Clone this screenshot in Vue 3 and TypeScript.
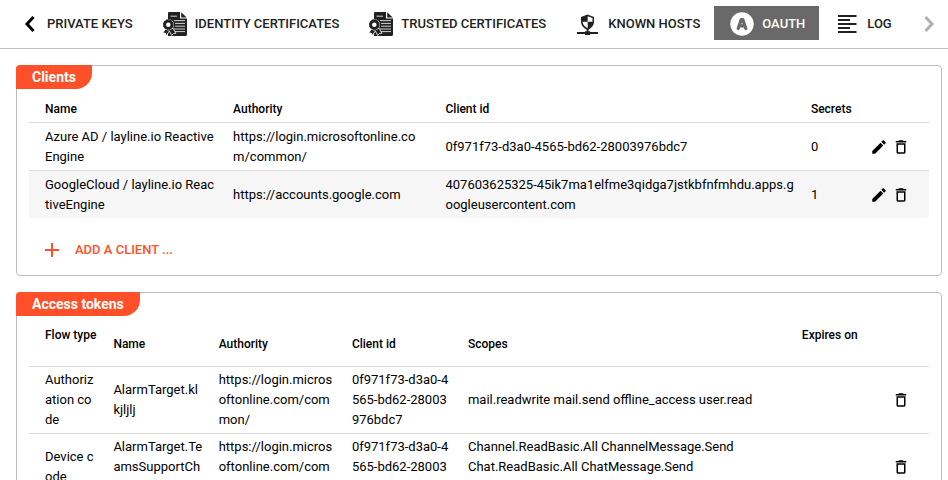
<script setup lang="ts">
import { ref } from 'vue'

type TabIcon = 'none' | 'certificate' | 'host' | 'oauth' | 'log'

interface Tab {
  label: string
  icon: TabIcon
}

interface Client {
  name: string
  authority: string
  clientId: string
  secrets: number
}

interface AccessToken {
  flow: string
  name: string
  authority: string
  clientId: string
  scopes: string
  expires: string
}

const tabs: Tab[] = [
  { label: 'Private keys', icon: 'none' },
  { label: 'Identity certificates', icon: 'certificate' },
  { label: 'Trusted certificates', icon: 'certificate' },
  { label: 'Known hosts', icon: 'host' },
  { label: 'OAuth', icon: 'oauth' },
  { label: 'Log', icon: 'log' },
]
const active = ref('OAuth')

const clients: Client[] = [
  {
    name: 'Azure AD / layline.io Reactive Engine',
    authority: 'https://login.microsoftonline.com/common/',
    clientId: '0f971f73-d3a0-4565-bd62-28003976bdc7',
    secrets: 0,
  },
  {
    name: 'GoogleCloud / layline.io ReactiveEngine',
    authority: 'https://accounts.google.com',
    clientId: '407603625325-45ik7ma1elfme3qidga7jstkbfnfmhdu.apps.googleusercontent.com',
    secrets: 1,
  },
]

const tokens: AccessToken[] = [
  {
    flow: 'Authorization code',
    name: 'AlarmTarget.klkjljlj',
    authority: 'https://login.microsoftonline.com/common/',
    clientId: '0f971f73-d3a0-4565-bd62-28003976bdc7',
    scopes: 'mail.readwrite mail.send offline_access user.read',
    expires: '',
  },
  {
    flow: 'Device code',
    name: 'AlarmTarget.TeamsSupportChannel',
    authority: 'https://login.microsoftonline.com/common/',
    clientId: '0f971f73-d3a0-4565-bd62-28003976bdc7',
    scopes: 'Channel.ReadBasic.All ChannelMessage.Send Chat.ReadBasic.All ChatMessage.Send ChannelMessage.Read.All',
    expires: '',
  },
]
</script>

<template>
  <div class="app">
    <header class="bar">
      <button class="scroll prev" type="button" aria-label="Previous tabs">
        <svg viewBox="0 0 18 18"><path d="M12.500 2 6 9l6.500 7" /></svg>
      </button>
      <nav class="tabs">
        <button
          v-for="tab in tabs"
          :key="tab.label"
          type="button"
          class="tab"
          :class="{ active: tab.label === active }"
          @click="active = tab.label"
        >
          <svg v-if="tab.icon === 'certificate'" class="tab-icon" viewBox="0 0 24 24">
            <path fill="currentColor" d="M6 0h11v6.500h7V22.500q0 1.500-1.500 1.500H5V1Q5 0 6 0z" />
            <path fill="currentColor" d="M18.200 0.300 23.700 5.400h-5.500z" />
            <path fill="none" stroke="#fff" stroke-width="0.800" d="M7.500 4.200H14M11 8.600h11M12 11.400h10M12 14.200h10M11 17h11M11 19.600h11" />
            <path fill="currentColor" stroke="#fff" stroke-width="0.800" d="M2.800 16.500-.3 21l2.600.1 1.100 2.400 3-4.500 2.300 4.500 1.800-2 2.500-.3-3-5z" />
            <circle cx="5.300" cy="12.700" r="5.700" fill="#fff" />
            <circle cx="5.300" cy="12.700" r="3.700" fill="#fff" stroke="currentColor" stroke-width="2.800" />
            <circle cx="5.300" cy="12.700" r="4.900" fill="none" stroke="currentColor" stroke-width="1" stroke-dasharray="1.500 1" />
          </svg>
          <svg v-else-if="tab.icon === 'host'" class="tab-icon" viewBox="0 0 24 24">
            <path fill="currentColor" d="M11.500 2.500 18 5v4.500c0 4-2.500 6.700-6.500 8.500C7.500 16.200 5 13.500 5 9.500V5z" />
            <path fill="#fff" d="M11.700 4.300 16.500 6v3.700h-4.800zM11.700 9.700v6.500C8.800 14.700 6.800 12.600 6.500 9.700z" />
            <path fill="currentColor" d="M10.700 17h1.800v2.200h1.700v.9H22v1.800h-7.800v1H9v-1H1v-1.800h8v-.9h1.700z" />
          </svg>
          <svg v-else-if="tab.icon === 'oauth'" class="tab-icon" viewBox="0 0 24 24">
            <circle cx="12" cy="12" r="11.700" fill="#fff" />
            <path fill="none" stroke="#696969" stroke-width="3.200" stroke-linecap="round" stroke-linejoin="round" d="M8.200 16.500 11.200 7.500h1.600l3 9M9.500 13.800h5" />
          </svg>
          <svg v-else-if="tab.icon === 'log'" class="tab-icon" viewBox="0 0 24 24">
            <path fill="none" stroke="currentColor" stroke-width="2" d="M3 4h18.500M3 8h12M3 12h18.500M3 16h12M3 20h18.500" />
          </svg>
          <span>{{ tab.label }}</span>
        </button>
      </nav>
      <button class="scroll next" type="button" aria-label="Next tabs">
        <svg viewBox="0 0 18 18"><path d="M5.500 2 12 9l-6.500 7" /></svg>
      </button>
    </header>

    <main class="content">
      <section class="panel">
        <h2 class="title">Clients</h2>
        <table class="clients">
          <thead>
            <tr>
              <th class="name">Name</th>
              <th class="authority">Authority</th>
              <th class="client-id">Client id</th>
              <th>Secrets</th>
              <th class="actions" aria-label="Actions"></th>
            </tr>
          </thead>
          <tbody>
            <tr v-for="client in clients" :key="client.clientId">
              <td>{{ client.name }}</td>
              <td class="authority">{{ client.authority }}</td>
              <td>{{ client.clientId }}</td>
              <td>{{ client.secrets }}</td>
              <td class="actions">
                <div class="buttons">
                  <button class="icon" type="button" aria-label="Edit client">
                    <svg viewBox="0 0 24 24"><path d="M3 17.250V21h3.750L17.810 9.940l-3.750-3.750L3 17.250zM20.710 7.040a1 1 0 0 0 0-1.410l-2.340-2.340a1 1 0 0 0-1.410 0l-1.830 1.830 3.750 3.750 1.830-1.830z" /></svg>
                  </button>
                  <button class="icon" type="button" aria-label="Delete client">
                    <svg viewBox="0 0 24 24"><path d="M6 19c0 1.100.9 2 2 2h8c1.100 0 2-.9 2-2V7H6v12zM8 9h8v10H8V9zm7.500-5-1-1h-5l-1 1H5v2h14V4z" /></svg>
                  </button>
                </div>
              </td>
            </tr>
          </tbody>
        </table>
        <button class="add" type="button">
          <svg viewBox="0 0 14 14"><path d="M7 0v14M0 7h14" /></svg>
          <span>Add a client ...</span>
        </button>
      </section>

      <section class="panel">
        <h2 class="title">Access tokens</h2>
        <table class="tokens">
          <thead>
            <tr>
              <th class="flow top">Flow type</th>
              <th class="name">Name</th>
              <th class="authority">Authority</th>
              <th class="client-id">Client id</th>
              <th class="scopes">Scopes</th>
              <th class="top">Expires on</th>
              <th class="actions" aria-label="Actions"></th>
            </tr>
          </thead>
          <tbody>
            <tr v-for="token in tokens" :key="token.name">
              <td>{{ token.flow }}</td>
              <td>{{ token.name }}</td>
              <td>{{ token.authority }}</td>
              <td>{{ token.clientId }}</td>
              <td class="scopes">{{ token.scopes }}</td>
              <td>{{ token.expires }}</td>
              <td class="actions">
                <div class="buttons">
                  <button class="icon" type="button" aria-label="Delete token">
                    <svg viewBox="0 0 24 24"><path d="M6 19c0 1.100.9 2 2 2h8c1.100 0 2-.9 2-2V7H6v12zM8 9h8v10H8V9zm7.500-5-1-1h-5l-1 1H5v2h14V4z" /></svg>
                  </button>
                </div>
              </td>
            </tr>
          </tbody>
        </table>
      </section>
    </main>
  </div>
</template>

<style>
body {
  background: #fff;
}
</style>

<style scoped>
.app {
  display: flex;
  flex-direction: column;
  height: 100vh;
  color: #000;
  font: 400 13px/20px Roboto, sans-serif;
}
.app * {
  box-sizing: border-box;
}
button {
  display: flex;
  align-items: center;
  padding: 0;
  border: 0;
  background: none;
  color: inherit;
  font: inherit;
  cursor: pointer;
}
svg {
  display: block;
  flex: none;
}

.bar {
  display: flex;
  flex: none;
  align-items: center;
  padding: 6px 0 8px;
  border-bottom: 1px solid #bdbdbd;
  color: #212121;
}
.tabs {
  display: flex;
  flex: 1;
  min-width: 0;
  overflow: hidden;
}
.tab {
  flex: none;
  gap: 8px;
  height: 34px;
  padding: 2px 14px 0 16px;
  font-weight: 500;
  text-transform: uppercase;
  white-space: nowrap;
}
.tab:first-child {
  padding-left: 8px;
}
.tab.active {
  background: #696969;
  color: #fff;
}
.tab-icon {
  width: 24px;
  height: 24px;
}
.scroll {
  flex: none;
  height: 34px;
  padding-top: 2px;
}
.scroll svg {
  width: 18px;
  height: 18px;
  fill: none;
  stroke: currentColor;
  stroke-width: 3;
}
.prev {
  padding-left: 21px;
  color: #000;
}
.next {
  padding-right: 10px;
  color: #b0b0b0;
}

.content {
  display: flex;
  flex: 1;
  flex-direction: column;
  gap: 16px;
  min-height: 0;
  padding: 16px 6px 16px 16px;
  overflow-y: auto;
  scrollbar-width: none;
}
.panel {
  flex: none;
  padding: 0 12px 7px;
  border: 1px solid #bdbdbd;
  border-radius: 4px;
}
.title {
  width: fit-content;
  margin: -1px 0 6px -13px;
  padding: 0 16px;
  border-radius: 4px 0 16px 0;
  background: #ff5029;
  color: #fff;
  font-size: 14px;
  font-weight: 700;
  line-height: 24px;
}

table {
  width: 100%;
  border-spacing: 0;
  table-layout: fixed;
}
th,
td {
  padding: 3px 0 3px 16px;
  text-align: left;
  vertical-align: middle;
  word-break: break-all;
}
th {
  font-size: 12px;
  font-weight: 500;
  white-space: nowrap;
}
th.top {
  vertical-align: top;
}
td {
  height: 48px;
  border-top: 1px solid #dcdcdc;
}
tbody tr:nth-child(even) td:first-child {
  border-bottom-left-radius: 4px;
}
tbody tr:nth-child(even) td:last-child {
  border-bottom-right-radius: 4px;
}
.clients th {
  height: 27px;
}
.clients tbody tr:nth-child(even) td {
  background: #f6f6f6;
}
.clients .name {
  width: 20.9%;
}
.clients .authority {
  width: 23.6%;
  padding-right: 8px;
}
.clients .client-id {
  width: 40.6%;
}
.tokens th {
  height: 44px;
}
.tokens .flow {
  width: 7.6%;
}
.tokens .name {
  width: 11.7%;
}
.tokens .authority {
  width: 14.8%;
}
.tokens .client-id {
  width: 12.9%;
}
.tokens .scopes {
  width: 37.1%;
  padding-right: 8px;
  word-break: normal;
}
.actions {
  width: 64px;
  padding-right: 19px;
  padding-left: 0;
}
.buttons {
  display: flex;
  justify-content: flex-end;
  gap: 4px;
}
.icon svg {
  width: 18px;
  height: 18px;
  fill: currentColor;
}

.add {
  gap: 16px;
  height: 36px;
  margin-top: 14px;
  padding: 0 16px;
  color: #ff5029;
  font-weight: 500;
  text-transform: uppercase;
}
.add svg {
  width: 14px;
  height: 14px;
  stroke: currentColor;
  stroke-width: 2;
}
</style>
